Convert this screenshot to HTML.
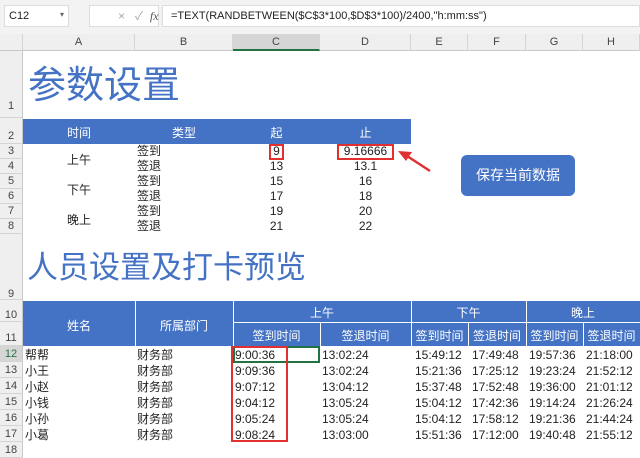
<!DOCTYPE html><html><head><meta charset="utf-8"><style>
*{margin:0;padding:0;box-sizing:border-box}
body{width:640px;height:452px;overflow:hidden;background:#fff;font-family:"Liberation Sans","Noto Sans CJK SC",sans-serif;font-size:12px;color:#222;position:relative}
.a{position:absolute;white-space:nowrap}
.ch{position:absolute;top:34px;height:17px;background:#efefef;border-right:1px solid #d4d4d4;border-bottom:1px solid #c8c8c8;text-align:center;line-height:16px;color:#444;font-size:11px}
.rh{position:absolute;left:0;width:23px;background:#efefef;border-bottom:1px solid #d4d4d4;border-right:1px solid #c8c8c8;text-align:center;color:#444;font-size:11px}
.blue{position:absolute;background:#4472c4;color:#fff;text-align:center}
.c{position:absolute;text-align:center}
</style></head><body>
<div class="a" style="left:0;top:0;width:640px;height:34px;background:#f3f3f3"></div>
<div class="a" style="left:4px;top:5px;width:65px;height:22px;background:#fff;border:1px solid #ddd;line-height:20px;padding-left:4px;font-size:11px">C12</div>
<div class="a" style="left:60px;top:10px;font-size:8px;color:#666">▾</div>
<div class="a" style="left:89px;top:5px;width:70px;height:22px;background:#fff;border:1px solid #ddd;color:#aaa;line-height:20px;font-size:12px;padding-left:28px">×&nbsp;&nbsp;&nbsp;✓&nbsp;&nbsp;<i style="color:#555;font-family:'Liberation Serif',serif">fx</i></div>
<div class="a" style="left:162px;top:5px;width:478px;height:22px;background:#fff;border:1px solid #ddd;line-height:20px;padding-left:8px;font-size:11px">=TEXT(RANDBETWEEN($C$3*100,$D$3*100)/2400,"h:mm:ss")</div>
<div class="ch" style="left:0;width:23px"></div>
<div class="ch" style="left:23px;width:112px">A</div>
<div class="ch" style="left:135px;width:98px">B</div>
<div class="ch" style="left:233px;width:87px;background:#d6d6d6;border-bottom:2px solid #217346">C</div>
<div class="ch" style="left:320px;width:91px">D</div>
<div class="ch" style="left:411px;width:57px">E</div>
<div class="ch" style="left:468px;width:58px">F</div>
<div class="ch" style="left:526px;width:57px">G</div>
<div class="ch" style="left:583px;width:57px">H</div>
<div class="rh" style="top:51px;height:67px;line-height:110px">1</div>
<div class="rh" style="top:118px;height:26px;line-height:36px">2</div>
<div class="rh" style="top:144px;height:15px;line-height:15px">3</div>
<div class="rh" style="top:159px;height:15px;line-height:15px">4</div>
<div class="rh" style="top:174px;height:15px;line-height:15px">5</div>
<div class="rh" style="top:189px;height:15px;line-height:15px">6</div>
<div class="rh" style="top:204px;height:15px;line-height:15px">7</div>
<div class="rh" style="top:219px;height:15px;line-height:15px">8</div>
<div class="rh" style="top:234px;height:66px;line-height:120px">9</div>
<div class="rh" style="top:300px;height:22px;line-height:30px">10</div>
<div class="rh" style="top:322px;height:24px;line-height:32px">11</div>
<div class="rh" style="top:346px;height:16px;line-height:16px;background:#d6d6d6;color:#217346">12</div>
<div class="rh" style="top:362px;height:16px;line-height:16px">13</div>
<div class="rh" style="top:378px;height:16px;line-height:16px">14</div>
<div class="rh" style="top:394px;height:16px;line-height:16px">15</div>
<div class="rh" style="top:410px;height:16px;line-height:16px">16</div>
<div class="rh" style="top:426px;height:16px;line-height:16px">17</div>
<div class="rh" style="top:442px;height:16px;line-height:16px">18</div>
<div class="a" style="left:28px;top:62px;font-size:38px;color:#4472c4;line-height:48px">参数设置</div>
<div class="blue" style="left:23px;top:119px;width:388px;height:25px"></div>
<div class="a" style="left:23px;top:124px;width:112px;text-align:center;color:#fff">时间</div>
<div class="a" style="left:135px;top:124px;width:98px;text-align:center;color:#fff">类型</div>
<div class="a" style="left:233px;top:124px;width:87px;text-align:center;color:#fff">起</div>
<div class="a" style="left:320px;top:124px;width:91px;text-align:center;color:#fff">止</div>
<div class="a" style="left:23px;top:151px;width:112px;text-align:center">上午</div>
<div class="a" style="left:23px;top:181px;width:112px;text-align:center">下午</div>
<div class="a" style="left:23px;top:211px;width:112px;text-align:center">晚上</div>
<div class="a" style="left:137px;top:144px;line-height:15px">签到<br>签退<br>签到<br>签退<br>签到<br>签退</div>
<div class="a" style="left:233px;top:144px;width:87px;text-align:center;line-height:15px">9<br>13<br>15<br>17<br>19<br>21</div>
<div class="a" style="left:320px;top:144px;width:91px;text-align:center;line-height:15px">9.16666<br>13.1<br>16<br>18<br>20<br>22</div>
<div class="a" style="left:269px;top:144px;width:15px;height:16px;border:2px solid #e03030"></div>
<div class="a" style="left:337px;top:144px;width:57px;height:16px;border:2px solid #e03030"></div>
<svg class="a" style="left:396px;top:148px" width="40" height="28"><line x1="34" y1="23" x2="8" y2="6" stroke="#e03030" stroke-width="2.5"/><polygon points="2,3 16,4 10,13" fill="#e03030"/></svg>
<div class="a" style="left:461px;top:155px;width:114px;height:41px;background:#4472c4;border-radius:6px;color:#fff;font-size:14px;text-align:center;line-height:41px">保存当前数据</div>
<div class="a" style="left:27px;top:246px;font-size:31px;color:#4472c4;line-height:44px">人员设置及打卡预览</div>
<div class="blue" style="left:23px;top:301px;width:617px;height:45px"></div>
<div class="a" style="left:135px;top:301px;width:1px;height:45px;background:#fff"></div>
<div class="a" style="left:233px;top:301px;width:1px;height:45px;background:#fff"></div>
<div class="a" style="left:411px;top:301px;width:1px;height:45px;background:#fff"></div>
<div class="a" style="left:526px;top:301px;width:1px;height:45px;background:#fff"></div>
<div class="a" style="left:233px;top:322px;width:407px;height:1px;background:#fff"></div>
<div class="a" style="left:320px;top:322px;width:1px;height:24px;background:#fff"></div>
<div class="a" style="left:468px;top:322px;width:1px;height:24px;background:#fff"></div>
<div class="a" style="left:583px;top:322px;width:1px;height:24px;background:#fff"></div>
<div class="a" style="left:23px;top:317px;width:112px;text-align:center;color:#fff">姓名</div>
<div class="a" style="left:135px;top:317px;width:98px;text-align:center;color:#fff">所属部门</div>
<div class="a" style="left:233px;top:304px;width:178px;text-align:center;color:#fff">上午</div>
<div class="a" style="left:411px;top:304px;width:115px;text-align:center;color:#fff">下午</div>
<div class="a" style="left:526px;top:304px;width:114px;text-align:center;color:#fff">晚上</div>
<div class="a" style="left:233px;top:327px;width:87px;text-align:center;color:#fff">签到时间</div>
<div class="a" style="left:320px;top:327px;width:91px;text-align:center;color:#fff">签退时间</div>
<div class="a" style="left:411px;top:327px;width:57px;text-align:center;color:#fff">签到时间</div>
<div class="a" style="left:468px;top:327px;width:58px;text-align:center;color:#fff">签退时间</div>
<div class="a" style="left:526px;top:327px;width:57px;text-align:center;color:#fff">签到时间</div>
<div class="a" style="left:583px;top:327px;width:57px;text-align:center;color:#fff">签退时间</div>
<div class="a" style="left:25px;top:347px;line-height:16px">帮帮<br>小王<br>小赵<br>小钱<br>小孙<br>小葛</div>
<div class="a" style="left:137px;top:347px;line-height:16px">财务部<br>财务部<br>财务部<br>财务部<br>财务部<br>财务部</div>
<div class="a" style="left:235px;top:347px;line-height:16px">9:00:36<br>9:09:36<br>9:07:12<br>9:04:12<br>9:05:24<br>9:08:24</div>
<div class="a" style="left:322px;top:347px;line-height:16px">13:02:24<br>13:02:24<br>13:04:12<br>13:05:24<br>13:05:24<br>13:03:00</div>
<div class="a" style="left:415px;top:347px;line-height:16px">15:49:12<br>15:21:36<br>15:37:48<br>15:04:12<br>15:04:12<br>15:51:36</div>
<div class="a" style="left:472px;top:347px;line-height:16px">17:49:48<br>17:25:12<br>17:52:48<br>17:42:36<br>17:58:12<br>17:12:00</div>
<div class="a" style="left:529px;top:347px;line-height:16px">19:57:36<br>19:23:24<br>19:36:00<br>19:14:24<br>19:21:36<br>19:40:48</div>
<div class="a" style="left:586px;top:347px;line-height:16px">21:18:00<br>21:52:12<br>21:01:12<br>21:26:24<br>21:44:24<br>21:55:12</div>
<div class="a" style="left:233px;top:346px;width:87px;height:17px;border:2px solid #217346"></div>
<div class="a" style="left:231px;top:346px;width:57px;height:96px;border:2px solid #e03030"></div>
</body></html>
